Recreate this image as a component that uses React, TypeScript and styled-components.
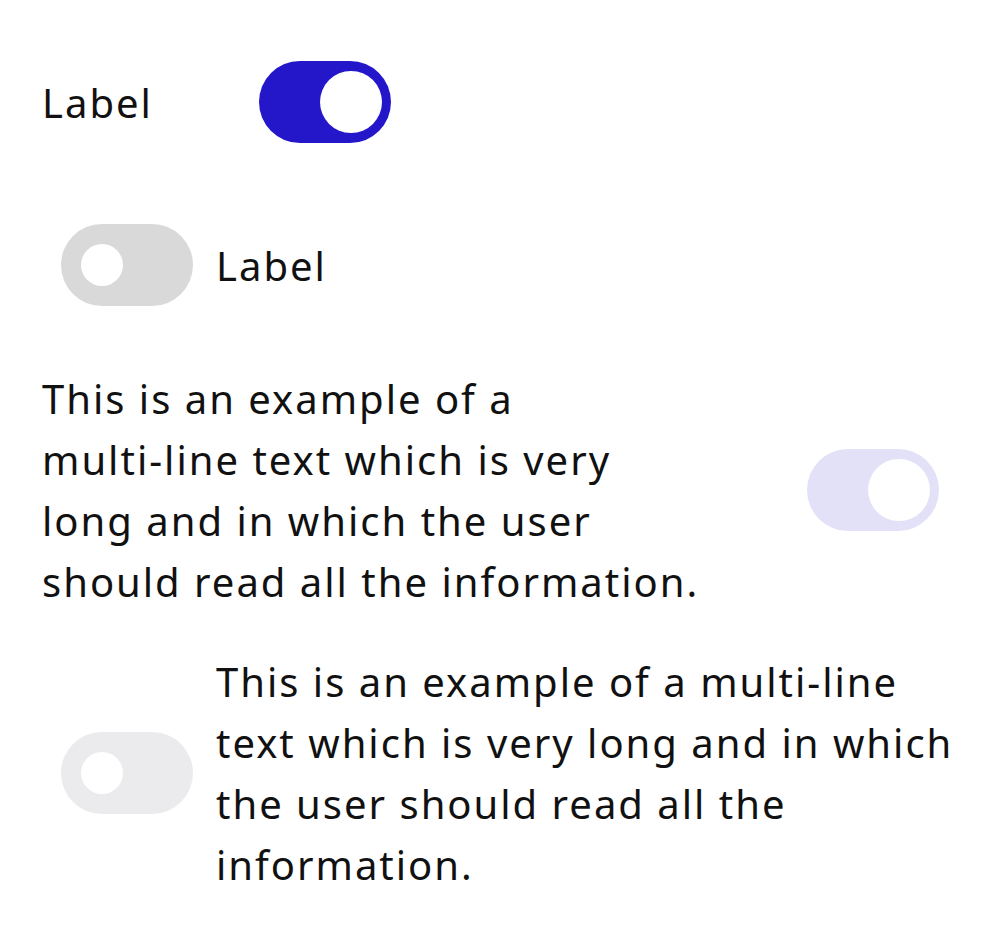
import React from 'react'
import styled, { createGlobalStyle } from 'styled-components'

const GlobalStyle = createGlobalStyle`
  body {
    margin: 0;
    background: #ffffff;
    font-family: "Noto Sans", "Open Sans", sans-serif;
    color: #111111;
  }
`

const Page = styled.div`
  width: 1000px;
  height: 935px;
  box-sizing: border-box;
  padding: 61px 42px 0 42px;
  display: flex;
  flex-direction: column;
`

const Row = styled.div<{ $top?: number }>`
  display: flex;
  align-items: center;
  gap: 4px;
  margin-top: ${p => p.$top ?? 0}px;
`

const SpreadRow = styled(Row)`
  justify-content: space-between;
`

const Label = styled.span<{ $width?: number }>`
  font-size: 40px;
  line-height: 61px;
  letter-spacing: 2px;
  ${p => (p.$width ? `width: ${p.$width}px; flex: none;` : '')}
`

const Text = styled.p<{ $width: number }>`
  margin: 0;
  font-size: 40px;
  line-height: 61px;
  letter-spacing: 2px;
  width: ${p => p.$width}px;
`

const NoBreak = styled.span`
  white-space: nowrap;
`

const Slot = styled.div`
  width: 170px;
  flex: none;
  display: flex;
  justify-content: center;
`

const Track = styled.button<{ $on: boolean; $disabled: boolean }>`
  width: 132px;
  height: 82px;
  border: none;
  border-radius: 41px;
  padding: 0;
  display: flex;
  align-items: center;
  justify-content: ${p => (p.$on ? 'flex-end' : 'flex-start')};
  background: ${p =>
    p.$on
      ? p.$disabled
        ? '#e3e1f7'
        : '#2317c9'
      : p.$disabled
        ? '#ebebed'
        : '#d9d9d9'};
  cursor: ${p => (p.$disabled ? 'default' : 'pointer')};
`

const Knob = styled.span<{ $on: boolean }>`
  width: ${p => (p.$on ? 62 : 42)}px;
  height: ${p => (p.$on ? 62 : 42)}px;
  margin: 0 ${p => (p.$on ? 9 : 20)}px;
  border-radius: 50%;
  background: #ffffff;
`

const Toggle: React.FC<{ on: boolean; disabled?: boolean }> = ({ on, disabled = false }) => (
  <Track $on={on} $disabled={disabled} aria-pressed={on} disabled={disabled}>
    <Knob $on={on} />
  </Track>
)

const LongText = () => (
  <>
    This is an example of a <NoBreak>multi-line</NoBreak> text which is very long and in which
    the user should read all the information.
  </>
)

export default function App() {
  return (
    <Page>
      <GlobalStyle />
      <Row>
        <Label $width={194}>Label</Label>
        <Slot>
          <Toggle on />
        </Slot>
      </Row>
      <Row $top={81}>
        <Slot>
          <Toggle on={false} />
        </Slot>
        <Label>Label</Label>
      </Row>
      <SpreadRow $top={62}>
        <Text $width={666}>
          <LongText />
        </Text>
        <Slot>
          <Toggle on disabled />
        </Slot>
      </SpreadRow>
      <Row $top={39}>
        <Slot>
          <Toggle on={false} disabled />
        </Slot>
        <Text $width={742}>
          <LongText />
        </Text>
      </Row>
    </Page>
  )
}
